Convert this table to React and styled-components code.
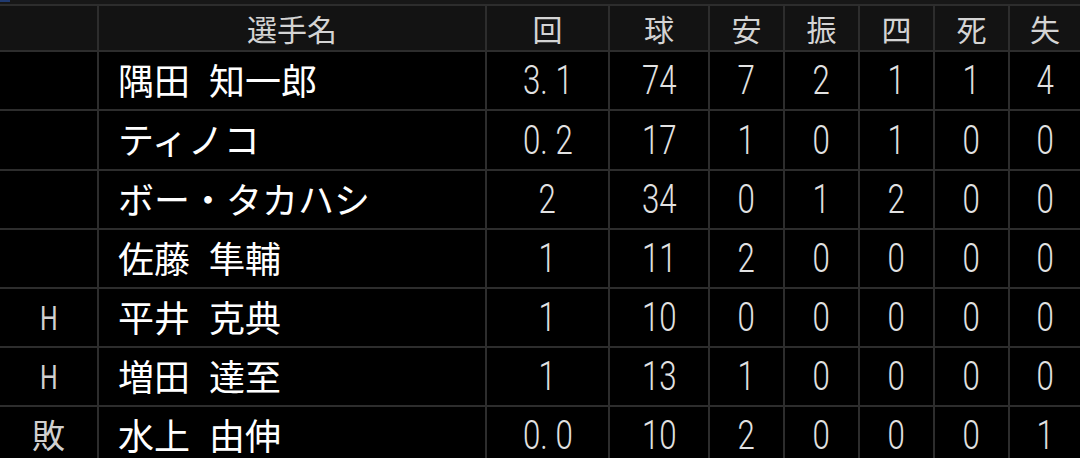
import React from 'react';
import styled, { createGlobalStyle, css } from 'styled-components';

const GlobalStyle = createGlobalStyle`
  html, body {
    margin: 0;
    padding: 0;
    background: #000;
    overflow: hidden;
  }
`;

const headers = ['選手名', '回', '球', '安', '振', '四', '死', '失'];

const rows = [
  { mark: '', name: ['隅田', '知一郎'], stats: ['3.1', '74', '7', '2', '1', '1', '4'] },
  { mark: '', name: ['ティノコ'], stats: ['0.2', '17', '1', '0', '1', '0', '0'] },
  { mark: '', name: ['ボー・タカハシ'], stats: ['2', '34', '0', '1', '2', '0', '0'] },
  { mark: '', name: ['佐藤', '隼輔'], stats: ['1', '11', '2', '0', '0', '0', '0'] },
  { mark: 'H', name: ['平井', '克典'], stats: ['1', '10', '0', '0', '0', '0', '0'] },
  { mark: 'H', name: ['増田', '達至'], stats: ['1', '13', '1', '0', '0', '0', '0'] },
  { mark: '敗', name: ['水上', '由伸'], stats: ['0.0', '10', '2', '0', '0', '0', '1'] },
];

export default function App() {
  return (
    <>
      <GlobalStyle />
      <TopStrip />
      <Table>
        <HeadCell />
        {headers.map((h) => (
          <HeadCell key={h}>{h}</HeadCell>
        ))}
        {rows.map((r, i) => (
          <React.Fragment key={i}>
            <MarkCell>
              <Mark $latin={/^[A-Z]$/.test(r.mark)}>{r.mark}</Mark>
            </MarkCell>
            <NameCell>
              <Name>{r.name.join(' ')}</Name>
            </NameCell>
            {r.stats.map((s, j) => (
              <NumCell key={j}>
                <Num>{s.replace('.', '. ')}</Num>
              </NumCell>
            ))}
          </React.Fragment>
        ))}
      </Table>
    </>
  );
}

const TopStrip = styled.div`
  position: relative;
  height: 4px;
  background: #171717;
  &::before {
    content: '';
    position: absolute;
    left: 0;
    top: 0;
    width: 10px;
    height: 2px;
    background: #203a70;
  }
`;

const Table = styled.div`
  display: grid;
  grid-template-columns: 97px 386px 121px 98px 73px 73px 73px 73px 1fr;
  grid-template-rows: 44px 57px 58px 57px 57px 57px 57px 57px;
  gap: 2px;
  padding-top: 2px;
  background: #2d2d2d;
  font-family: 'Noto Sans CJK JP', 'Noto Sans', sans-serif;
`;

const Cell = styled.div`
  display: flex;
  align-items: center;
  justify-content: center;
  background: #000;
  overflow: hidden;
`;

const HeadCell = styled(Cell)`
  background: #131313;
  color: #d4d4d4;
  font-size: 30px;
  line-height: 1;
`;

const MarkCell = styled(Cell)`
  color: #d0d0d0;
`;

const digitFont = css`
  font-family: Roboto, 'Liberation Sans', sans-serif;
  font-weight: 300;
  font-size: 40px;
  line-height: 1;
  transform: scaleX(0.78);
`;

const Mark = styled.span`
  display: inline-block;
  font-size: 33px;
  line-height: 1;
  padding-bottom: 2px;
  ${(p) => p.$latin && digitFont}
  ${(p) =>
    p.$latin &&
    'font-size: 33px; font-weight: 400; transform: scaleX(0.75); padding: 2px 0 0;'}
`;

const NameCell = styled(Cell)`
  justify-content: flex-start;
  padding-left: 19px;
  color: #fff;
`;

const Name = styled.span`
  font-size: 36px;
  line-height: 1;
  word-spacing: 11px;
  white-space: pre;
  padding-bottom: 4px;
`;

const NumCell = styled(Cell)`
  color: #e2e2e2;
`;

const Num = styled.span`
  display: inline-block;
  ${digitFont}
  white-space: pre;
  padding-top: 1px;
`;
